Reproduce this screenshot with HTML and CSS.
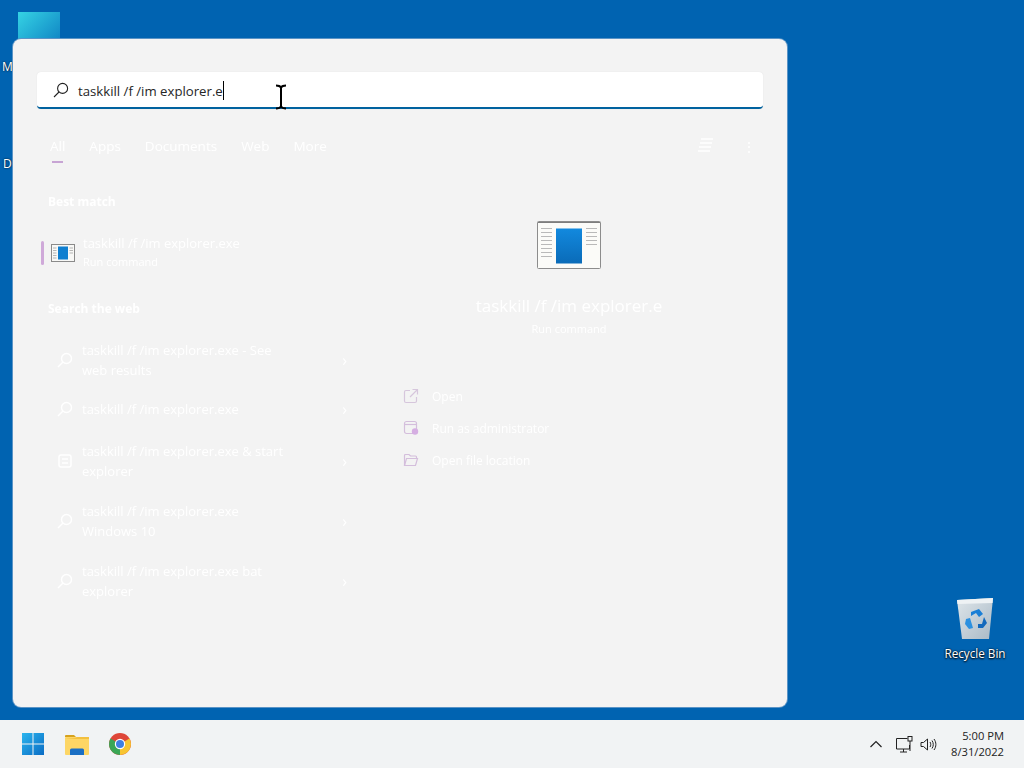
FILE: index.html
```html
<!DOCTYPE html>
<html lang="en">
<head>
<meta charset="utf-8">
<title>Search</title>
<link rel="stylesheet" href="styles.css">
</head>
<body>
<div class="screen">
  <main class="desktop">
    <div class="shortcut shortcut-teal"></div>
    <div class="desk-letter letter-m">M</div>
    <div class="desk-letter letter-d">D</div>

    <div class="bin">
      <svg class="bin-icon" width="38" height="44" viewBox="0 0 38 44">
        <defs><linearGradient id="binG" x1="0" y1="0" x2="1" y2="1"><stop offset="0" stop-color="#dfe6ea"/><stop offset="1" stop-color="#a9b9c6"/></linearGradient></defs>
        <path d="M1 3 L37 1 L33 42 L6 42 Z" fill="url(#binG)"/>
        <path d="M1 3 L37 1 L36.6 6 L1.5 7 Z" fill="#eef2f4"/>
        <path d="M15 15 L23 12 L27 17 L23 20 L20 16 L15 19 Z" fill="#1a7fd6"/>
        <path d="M28 20 L31 26 L27 31 L22 31 L22 27 L26 27 Z" fill="#1369bd"/>
        <path d="M10 22 L14 21 L17 31 L13 32 L9 27 Z" fill="#2b90e0"/>
      </svg>
      <div class="bin-label">Recycle Bin</div>
    </div>

    <section class="panel">
      <div class="searchbox">
        <svg class="search-icon" width="16" height="16" viewBox="0 0 16 16" fill="none" stroke="#222" stroke-width="1.1"><circle cx="9.6" cy="6.4" r="5"/><path d="M6 10 L1 15"/></svg>
        <span class="search-text">taskkill /f /im explorer.e</span><span class="caret"></span>
      </div>

      <nav class="tabs">
        <span class="tab tab-active">All</span>
        <span class="tab">Apps</span>
        <span class="tab">Documents</span>
        <span class="tab">Web</span>
        <span class="tab">More</span>
        <span class="tabs-right">
          <svg width="20" height="18" viewBox="0 0 20 18" fill="none" stroke="#fff" stroke-width="1.6"><path d="M5 2h12M4 6h12M3 10h12M2 14h12"/></svg>
          <span class="dots">⋮</span>
        </span>
      </nav>

      <div class="columns">
        <div class="results">
          <h2 class="group-title">Best match</h2>
          <div class="best">
            <span class="best-bar"></span>
            <svg class="app-mini" width="24" height="18" viewBox="0 0 24 18">
              <rect x=".5" y=".5" width="23" height="17" fill="#f8f8f6" stroke="#8a8a8a"/>
              <rect x="7" y="2.5" width="10" height="13" fill="#0f7fd0"/>
              <path d="M2 4h3.500M2 6.500h3.500M2 9h3.500M2 11.500h3.500M2 14h3.500M18.500 4h3.500M18.500 6.500h3.500M18.500 9h3.500" stroke="#999" stroke-width=".7"/>
            </svg>
            <div class="best-text">
              <div class="best-name">taskkill /f /im explorer.exe</div>
              <div class="best-sub">Run command</div>
            </div>
          </div>

          <h2 class="group-title web-title">Search the web</h2>
          <div class="web-row row-tall">
            <svg class="web-ico" width="16" height="16" viewBox="0 0 16 16" fill="none" stroke="#fff" stroke-width="1.4"><circle cx="9.500" cy="6.500" r="5"/><path d="M6 10 L1 15"/></svg>
            <div class="web-text">taskkill /f /im explorer.exe - See web results</div>
            <span class="chev">›</span>
          </div>
          <div class="web-row row-short">
            <svg class="web-ico" width="16" height="16" viewBox="0 0 16 16" fill="none" stroke="#fff" stroke-width="1.4"><circle cx="9.500" cy="6.500" r="5"/><path d="M6 10 L1 15"/></svg>
            <div class="web-text">taskkill /f /im explorer.exe</div>
            <span class="chev">›</span>
          </div>
          <div class="web-row row-tall2">
            <svg class="web-ico" width="16" height="16" viewBox="0 0 16 16" fill="none" stroke="#fff" stroke-width="1.4"><rect x="2" y="2" width="12" height="12" rx="2"/><path d="M5 6h6M5 10h6"/></svg>
            <div class="web-text">taskkill /f /im explorer.exe &amp; start explorer</div>
            <span class="chev">›</span>
          </div>
          <div class="web-row row-tall2">
            <svg class="web-ico" width="16" height="16" viewBox="0 0 16 16" fill="none" stroke="#fff" stroke-width="1.4"><circle cx="9.500" cy="6.500" r="5"/><path d="M6 10 L1 15"/></svg>
            <div class="web-text">taskkill /f /im explorer.exe Windows 10</div>
            <span class="chev">›</span>
          </div>
          <div class="web-row row-tall2">
            <svg class="web-ico" width="16" height="16" viewBox="0 0 16 16" fill="none" stroke="#fff" stroke-width="1.4"><circle cx="9.500" cy="6.500" r="5"/><path d="M6 10 L1 15"/></svg>
            <div class="web-text">taskkill /f /im explorer.exe bat explorer</div>
            <span class="chev">›</span>
          </div>
        </div>

        <div class="detail">
          <svg class="app-big" width="64" height="48" viewBox="0 0 64 48">
            <defs><linearGradient id="blueG" x1="0" y1="0" x2="0" y2="1"><stop offset="0" stop-color="#1289de"/><stop offset="1" stop-color="#0a6bb8"/></linearGradient></defs>
            <rect x=".5" y=".5" width="63" height="47" rx="1" fill="#fbfbf8" stroke="#8c8c8c"/>
            <rect x="1" y="1" width="62" height="1" fill="#7d7d7d"/>
            <rect x="19" y="7.500" width="26" height="35" fill="url(#blueG)"/>
            <path d="M4 7.500h11M4 11.500h11M4 15.500h11M4 19.500h11M4 23.500h11M4 27.500h11M4 31.500h11M4 35.500h11M49 7.500h11M49 11.500h11M49 15.500h11M49 19.500h11M49 23.500h11" stroke="#a8a8a8" stroke-width=".8"/>
          </svg>
          <div class="detail-name">taskkill /f /im explorer.e</div>
          <div class="detail-sub">Run command</div>
          <ul class="actions">
            <li class="action">
              <svg width="16" height="16" viewBox="0 0 16 16" fill="none" stroke="#d6c6dc" stroke-width="1.2"><path d="M7 2.500H3a1.500 1.500 0 0 0-1.500 1.500v9A1.500 1.500 0 0 0 3 14.500h9a1.500 1.500 0 0 0 1.500-1.500V9"/><path d="M7 9 L14 2M9.500 1.500H14.500V6.500"/></svg>
              <span>Open</span>
            </li>
            <li class="action">
              <svg width="16" height="16" viewBox="0 0 16 16" fill="none" stroke="#d4bedc" stroke-width="1.2"><rect x="1.500" y="1.500" width="12" height="12" rx="2"/><path d="M1.500 4.500h12"/><circle cx="12" cy="11.500" r="3.200" fill="#d5aee2" stroke="none"/></svg>
              <span>Run as administrator</span>
            </li>
            <li class="action">
              <svg width="16" height="16" viewBox="0 0 16 16" fill="none" stroke="#d4bedc" stroke-width="1.2"><path d="M1.500 13V3.500a1 1 0 0 1 1-1h3.500l1.500 1.500h5a1 1 0 0 1 1 1V6"/><path d="M1.500 13.500l2-7h11l-2 7z"/></svg>
              <span>Open file location</span>
            </li>
          </ul>
        </div>
      </div>
    </section>

    <svg class="ibeam" width="12" height="26" viewBox="0 0 12 26" fill="none" stroke="#000" stroke-width="2"><path d="M1 1.500c3 0 4 .5 5 2 1-1.500 2-2 5-2M6 3.500v19M1 24.500c3 0 4-.5 5-2 1 1.500 2 2 5 2"/></svg>
  </main>

  <footer class="taskbar">
    <div class="pinned">
      <svg width="24" height="24" viewBox="0 0 24 24">
        <defs><linearGradient id="winG" x1="0" y1="0" x2="1" y2="1"><stop offset="0" stop-color="#2cb5ee"/><stop offset="1" stop-color="#0a6cc4"/></linearGradient></defs>
        <path d="M1 1h10.500v10.500H1zM12.500 1H23v10.500H12.500zM1 12.500h10.500V23H1zM12.500 12.500H23V23H12.500z" fill="url(#winG)"/>
      </svg>
      <svg width="24" height="22" viewBox="0 0 24 22">
        <path d="M0 3a1 1 0 0 1 1-1h8l2 2h-11z" fill="#d6a21e"/>
        <rect x="0" y="4" width="24" height="18" rx="1" fill="#fdd665"/>
        <path d="M0 6l10-1 2-1h12v2z" fill="#f3c03f"/>
        <path d="M5 22v-5a1.500 1.500 0 0 1 1.500-1.500h11A1.500 1.500 0 0 1 19 17v5z" fill="#1a6fc4"/>
      </svg>
      <svg width="22" height="22" viewBox="0 0 22 22">
        <circle cx="11" cy="11" r="11" fill="#de4638"/>
        <path d="M11 11 L1.500 5.500 A11 11 0 0 0 11 22 Z" fill="#3aa655"/>
        <path d="M11 11 L11 22 A11 11 0 0 0 20.500 5.500 Z" fill="#f7c531"/>
        <circle cx="11" cy="11" r="5.200" fill="#fff"/>
        <circle cx="11" cy="11" r="4" fill="#3f7fe0"/>
      </svg>
    </div>
    <div class="tray">
      <svg class="tray-chev" width="12" height="8" viewBox="0 0 12 8" fill="none" stroke="#222" stroke-width="1.200"><path d="M.5 7L6 1.500 11.500 7"/></svg>
      <svg class="tray-net" width="17" height="17" viewBox="0 0 17 17" fill="none" stroke="#222" stroke-width="1"><path d="M11.500 2.500H.5v10.500h13V9"/><path d="M4 16h7M7.500 13V16"/><rect x="12" y=".5" width="4" height="4.500" fill="#f1f3f4"/><path d="M14 5v10"/></svg>
      <svg class="tray-vol" width="17" height="15" viewBox="0 0 17 15" fill="none" stroke="#222" stroke-width="1"><path d="M1 5.500h2.500L7.500 2v11l-4-3.500H1z"/><path d="M10 5c1 1.500 1 3.500 0 5M12 3.500c1.700 2.500 1.700 5.500 0 8M14 2c2.500 3.500 2.500 7.500 0 11"/></svg>
      <div class="clock">
        <div>5:00 PM</div>
        <div>8/31/2022</div>
      </div>
    </div>
  </footer>
</div>
</body>
</html>
```
FILE: styles.css
```css
* { box-sizing: border-box; }
html, body { margin: 0; padding: 0; }
body { font-family: "Open Sans", "Noto Sans", "Liberation Sans", sans-serif; }
.screen { width: 1024px; height: 768px; display: flex; flex-direction: column; overflow: hidden; }

.desktop { position: relative; flex: 1; background: #0063b1; }

.shortcut-teal { position: absolute; left: 18px; top: 12px; width: 42px; height: 30px; background: linear-gradient(135deg, #35d3e4, #0f84c4); }
.desk-letter { position: absolute; color: #fff; font-size: 12px; text-shadow: 0 0 2px #000; }
.letter-m { left: 2px; top: 58px; }
.letter-d { left: 3px; top: 155px; }

.bin { position: absolute; left: 935px; top: 597px; width: 80px; display: flex; flex-direction: column; align-items: center; }
.bin-label { margin-top: 4px; color: #fff; font-size: 11.7px; line-height: 16px; text-shadow: 0 1px 2px #000, 0 0 2px #000; white-space: nowrap; }

.panel { position: absolute; left: 13px; top: 39px; width: 774px; height: 668px; background: #f3f3f3; border-radius: 8px; box-shadow: 0 0 0 1px #5b94c6; padding: 33px 24px 0; display: flex; flex-direction: column; }

.searchbox { height: 37px; background: #fff; border-radius: 4px; border-bottom: 2px solid #00629f; display: flex; align-items: center; padding-left: 16px; padding-top: 2px; flex: none; box-shadow: 0 0 1px #d8d8d8; }
.search-icon { margin-right: 9px; flex: none; margin-top: -2px; }
.search-text { font-size: 13.2px; color: #262626; line-height: 20px; }
.caret { width: 1px; height: 19px; background: #000; }

.tabs { height: 36px; margin-top: 19px; display: flex; align-items: center; padding-left: 13px; flex: none; color: #fff; font-size: 13.5px; gap: 24px; filter: blur(.6px); }
.tab { position: relative; }
.tab-active::after { content: ""; position: absolute; left: 2px; right: 2px; bottom: -8px; height: 2px; background: #c7a4d4; }
.tabs-right { margin-left: auto; display: flex; align-items: center; gap: 26px; padding-right: 7px; }
.dots { font-size: 14px; }

.columns { flex: 1; display: flex; }
.results { width: 330px; padding: 30px 0 0 4px; display: flex; flex-direction: column; flex: none; }
.group-title { margin: 0; font-size: 12px; font-weight: 700; line-height: 16px; color: #fff; padding-left: 7px; filter: blur(.6px); }
.best { margin-top: 24px; height: 36px; display: flex; align-items: center; position: relative; padding-left: 10px; }
.best-bar { position: absolute; left: 0; top: 7px; width: 3px; height: 24px; border-radius: 2px; background: #cfa9d9; }
.app-mini { flex: none; margin-right: 8px; margin-top: 2px; }
.best-text { color: #fff; filter: blur(.6px); }
.best-name { font-size: 13px; line-height: 19px; }
.best-sub { font-size: 11px; line-height: 17px; }
.web-title { margin-top: 31px; }
.web-row { display: flex; align-items: center; padding-left: 16px; padding-right: 20px; color: #fff; filter: blur(.6px); }
.row-tall { margin-top: 14px; height: 58px; }
.row-short { height: 42px; padding-bottom: 2px; }
.row-tall2 { height: 60px; }
.web-ico { flex: none; margin-right: 9px; }
.web-text { width: 215px; font-size: 13px; line-height: 20px; }
.chev { margin-left: auto; font-size: 16px; }

.detail { flex: 1; display: flex; flex-direction: column; align-items: center; padding-top: 57px; padding-left: 8px; }
.app-big { flex: none; }
.detail-name { margin-top: 24px; color: #fff; font-size: 17px; line-height: 26px; filter: blur(.6px); }
.detail-sub { margin-top: 2px; color: #fff; font-size: 11px; line-height: 16px; filter: blur(.6px); }
.actions { list-style: none; margin: 43px 0 0; padding: 0 0 0 28px; align-self: stretch; }
.action { display: flex; align-items: center; height: 32px; gap: 13px; color: #fff; font-size: 12px; }
.action span { filter: blur(.6px); }

.ibeam { position: absolute; left: 275px; top: 84px; }

.taskbar { height: 48px; flex: none; background: #f1f3f4; display: flex; align-items: center; justify-content: space-between; padding: 0 20px 0 21px; }
.pinned { display: flex; align-items: center; gap: 20px; }
.tray { display: flex; align-items: center; }
.tray-chev { margin-right: 14px; }
.tray-net { margin-right: 7px; }
.tray-vol { margin-right: 14px; }
.clock { text-align: right; font-size: 11.2px; line-height: 16px; color: #222; }
```
